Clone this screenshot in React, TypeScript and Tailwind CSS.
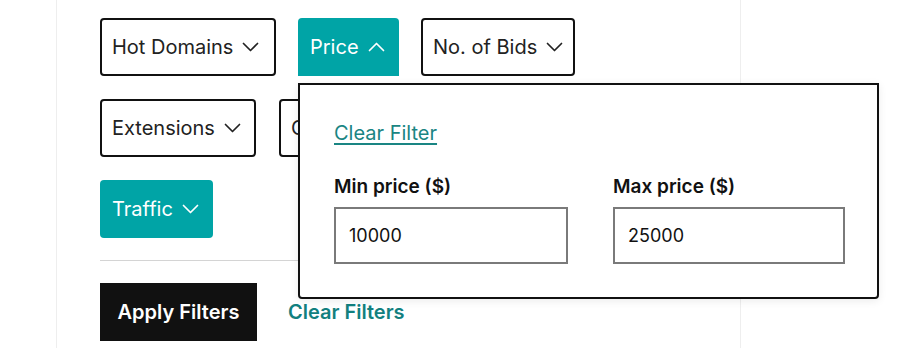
import React from "react";

const Chevron = ({ up = false }: { up?: boolean }) => (
  <svg width="17" height="10" viewBox="0 0 17 10" fill="none" className="shrink-0">
    {up ? (
      <path d="M1.5 8.5 L8.5 1.5 L15.5 8.5" stroke="currentColor" strokeWidth="1.7" strokeLinecap="round" strokeLinejoin="round" />
    ) : (
      <path d="M1.5 1.5 L8.5 8.5 L15.5 1.5" stroke="currentColor" strokeWidth="1.7" strokeLinecap="round" strokeLinejoin="round" />
    )}
  </svg>
);

const FilterBtn = ({ label, active = false, up = false, w }: { label: string; active?: boolean; up?: boolean; w: string }) =>
  active ? (
    <button className={`${w} h-[58px] shrink-0 flex items-center gap-[9px] pl-[12px] bg-[#00a4a6] text-white text-[20px] ${up ? "rounded-t-[4px]" : "rounded-[4px]"}`}>
      <span>{label}</span>
      <Chevron up={up} />
    </button>
  ) : (
    <button className={`${w} h-[58px] shrink-0 flex items-center gap-[9px] pl-[10px] border-2 border-[#111] rounded-[4px] bg-white text-[#222] text-[20px] whitespace-nowrap`}>
      <span>{label}</span>
      <Chevron />
    </button>
  );

export default function App() {
  return (
    <div className="w-[915px] h-[348px] bg-white overflow-hidden flex" style={{ fontFamily: "Inter, 'Noto Sans', sans-serif" }}>
      <div className="w-[56px] shrink-0" />
      <div className="relative w-[685px] h-[348px] border-l border-r border-[#eeeeee] pl-[43px] pr-[43px] pt-[18px]">
        <div className="flex flex-col gap-[23px]">
          <div className="flex gap-[22px]">
            <FilterBtn label="Hot Domains" w="w-[176px]" />
            <FilterBtn label="Price" active up w="w-[101px]" />
            <FilterBtn label="No. of Bids" w="w-[154px]" />
          </div>
          <div className="flex gap-[23px]">
            <FilterBtn label="Extensions" w="w-[156px]" />
            <FilterBtn label="Categories" w="w-[150px]" />
          </div>
          <div className="flex">
            <FilterBtn label="Traffic" active w="w-[113px]" />
          </div>
        </div>
        <div className="mt-[22px] h-px bg-[#d4d4d4]" />
        <div className="mt-[22px] flex items-center gap-[31px]">
          <button className="h-[58px] w-[157px] bg-[#111] text-white text-[20px] font-semibold">Apply Filters</button>
          <button className="text-[#12807f] text-[20px] font-semibold">Clear Filters</button>
        </div>

        <div className="absolute left-[241px] top-[83px] w-[581px] h-[216px] bg-white border-2 border-[#111] rounded-b-[4px] shadow-[0_2px_8px_rgba(0,0,0,0.08)] pl-[34px] pr-[33px] pt-[35px]">
          <a className="text-[#1a8583] text-[20px] underline underline-offset-[3px] decoration-[1.5px] leading-[26px] block w-fit">Clear Filter</a>
          <div className="mt-[28px] grid grid-cols-[234px_232px] gap-x-[45px]">
            <div className="flex flex-col">
              <label className="text-[#111] text-[19px] font-semibold leading-[26px]">Min price ($)</label>
              <div className="mt-[7px] h-[57px] border-2 border-[#7a7a7a] flex items-center pl-[13px] text-[18px] text-[#111]">10000</div>
            </div>
            <div className="flex flex-col">
              <label className="text-[#111] text-[19px] font-semibold leading-[26px]">Max price ($)</label>
              <div className="mt-[7px] h-[57px] border-2 border-[#7a7a7a] flex items-center pl-[13px] text-[18px] text-[#111]">25000</div>
            </div>
          </div>
        </div>
      </div>
    </div>
  );
}
